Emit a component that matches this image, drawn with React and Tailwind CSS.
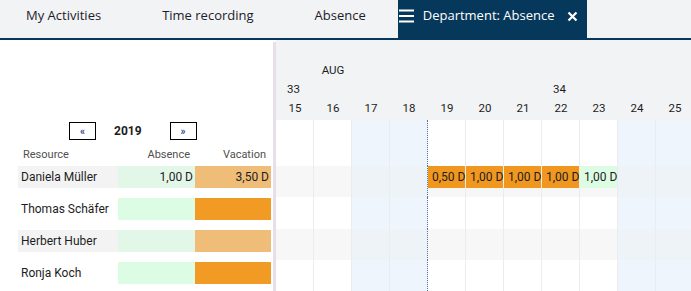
import React from 'react';

const DAYS = [
  { d: 15, week: '33' },
  { d: 16, month: 'AUG' },
  { d: 17, weekend: true },
  { d: 18, weekend: true, today: true },
  { d: 19 },
  { d: 20 },
  { d: 21 },
  { d: 22, week: '34' },
  { d: 23 },
  { d: 24, weekend: true },
  { d: 25, weekend: true },
];

const PEOPLE = [
  { name: 'Daniela Müller', absence: '1,00 D', vacation: '3,50 D' },
  { name: 'Thomas Schäfer' },
  { name: 'Herbert Huber' },
  { name: 'Ronja Koch' },
];

// bars shown in the first row, keyed by day
const BARS = {
  19: { text: '0,50 D', kind: 'vac' },
  20: { text: '1,00 D', kind: 'vac' },
  21: { text: '1,00 D', kind: 'vac' },
  22: { text: '1,00 D', kind: 'vac' },
  23: { text: '1,00 D', kind: 'abs' },
};

function cellBg(day, odd) {
  if (day.weekend) return odd ? 'bg-[#eef3f8]' : 'bg-[#eef5fd]';
  return odd ? 'bg-[#f7f7f7]' : 'bg-white';
}

export default function App() {
  return (
    <div className="w-[691px] h-[291px] overflow-hidden bg-white text-[#1d1d1d]" style={{ fontFamily: 'Roboto, sans-serif' }}>
      {/* tab bar */}
      <div className="h-[40px] bg-[#f2f3f5] border-b-2 border-[#06385b] flex items-stretch text-[13px]" style={{ fontFamily: '"Open Sans", sans-serif' }}>
        <div className="ml-[26px] flex items-center pb-[6px] text-[#1c1c2a]">My Activities</div>
        <div className="ml-[61px] flex items-center pb-[6px] text-[#1c1c2a]">Time recording</div>
        <div className="ml-[61px] flex items-center pb-[6px] text-[#1c1c2a]">Absence</div>
        <div className="ml-[32px] w-[189px] bg-[#06385b] text-white flex items-center pb-[6px] pl-[1px]">
          <svg width="15" height="14" viewBox="0 0 15 14" className="shrink-0">
            <rect x="0" y="0.5" width="15" height="2" fill="white" />
            <rect x="0" y="6" width="15" height="2" fill="white" />
            <rect x="0" y="11.5" width="15" height="2" fill="white" />
          </svg>
          <span className="ml-[9px]">Department: Absence</span>
          <svg width="11" height="11" viewBox="0 0 11 11" className="ml-[13px] mt-[1px] shrink-0">
            <path d="M1.5 1.5 L9.5 9.5 M9.5 1.5 L1.5 9.5" stroke="white" strokeWidth="2.2" />
          </svg>
        </div>
      </div>

      <div className="flex h-[251px]">
        {/* left panel */}
        <div className="w-[273px] shrink-0 pt-[82px]">
          <div className="flex items-center h-[18px]">
            <div className="ml-[69px] w-[27px] h-[18px] border border-black flex items-center justify-center text-[10px] font-bold text-[#2b3a8c]">«</div>
            <div className="ml-[18px] text-[12px] font-bold">2019</div>
            <div className="ml-[28px] w-[27px] h-[18px] border border-black flex items-center justify-center text-[10px] font-bold text-[#2b3a8c]">»</div>
          </div>
          <div className="flex items-center h-[26px] text-[11px] text-[#505050] pt-[5px]">
            <div className="pl-[23px] w-[118px]">Resource</div>
            <div className="w-[77px] text-right pr-[5px]">Absence</div>
            <div className="w-[76px] text-right pr-[5px]">Vacation</div>
          </div>
          {PEOPLE.map((p, i) => {
            const odd = i % 2 === 0;
            return (
              <div key={p.name} className="h-[32px]">
                <div className="flex h-[22px] text-[12px]">
                  <div className={`ml-[18px] w-[100px] flex items-center pl-[3px] ${odd ? 'bg-[#f3f3f3]' : 'bg-white'}`}>
                    {p.name}
                  </div>
                  <div className={`w-[77px] flex items-center justify-end pr-[2px] ${odd ? 'bg-[#e3f7e9]' : 'bg-[#dcfde4]'}`}>
                    {p.absence}
                  </div>
                  <div className={`w-[76px] flex items-center justify-end pr-[2px] ${odd ? 'bg-[#f0bd78]' : 'bg-[#f19a24]'}`}>
                    {p.vacation}
                  </div>
                </div>
              </div>
            );
          })}
        </div>

        {/* divider */}
        <div className="w-[3px] shrink-0 mt-[2px] bg-[#e6dfe9]" />

        {/* timeline */}
        <div className="flex-1 flex flex-col">
          <div className="h-[80px] bg-[#f2f3f5] flex">
            {DAYS.map((day) => (
              <div key={day.d} className="w-[38px] shrink-0 flex flex-col items-center text-[11.5px] pt-[23px]">
                <div className="h-[19px] leading-[14px]">{day.month || ''}</div>
                <div className="h-[19px] leading-[14px] w-full pl-[11px]">{day.week || ''}</div>
                <div className="h-[19px] leading-[14px]">{day.d}</div>
              </div>
            ))}
          </div>
          <div className="flex">
            {DAYS.map((day) => (
              <div
                key={day.d}
                className={`w-[38px] shrink-0 h-[46px] border-r ${day.today ? 'border-dotted border-[#5b72a0]' : 'border-[#ececec]'} ${cellBg(day, false)}`}
              />
            ))}
          </div>
          {PEOPLE.map((p, i) => {
            const odd = i % 2 === 0;
            return (
              <div key={p.name} className="flex h-[32px]">
                {DAYS.map((day) => {
                  const bar = i === 0 ? BARS[day.d] : null;
                  return (
                    <div
                      key={day.d}
                      className={`w-[38px] shrink-0 border-r ${day.today ? 'border-dotted border-[#5b72a0]' : 'border-[#ececec]'} ${cellBg(day, odd)}`}
                    >
                      {bar && (
                        <div className={`h-[22px] flex items-center pl-[4px] text-[12px] whitespace-nowrap ${bar.kind === 'vac' ? 'bg-[#f0971f]' : 'bg-[#dcfde4]'}`}>
                          {bar.text}
                        </div>
                      )}
                    </div>
                  );
                })}
              </div>
            );
          })}
        </div>
      </div>
    </div>
  );
}
